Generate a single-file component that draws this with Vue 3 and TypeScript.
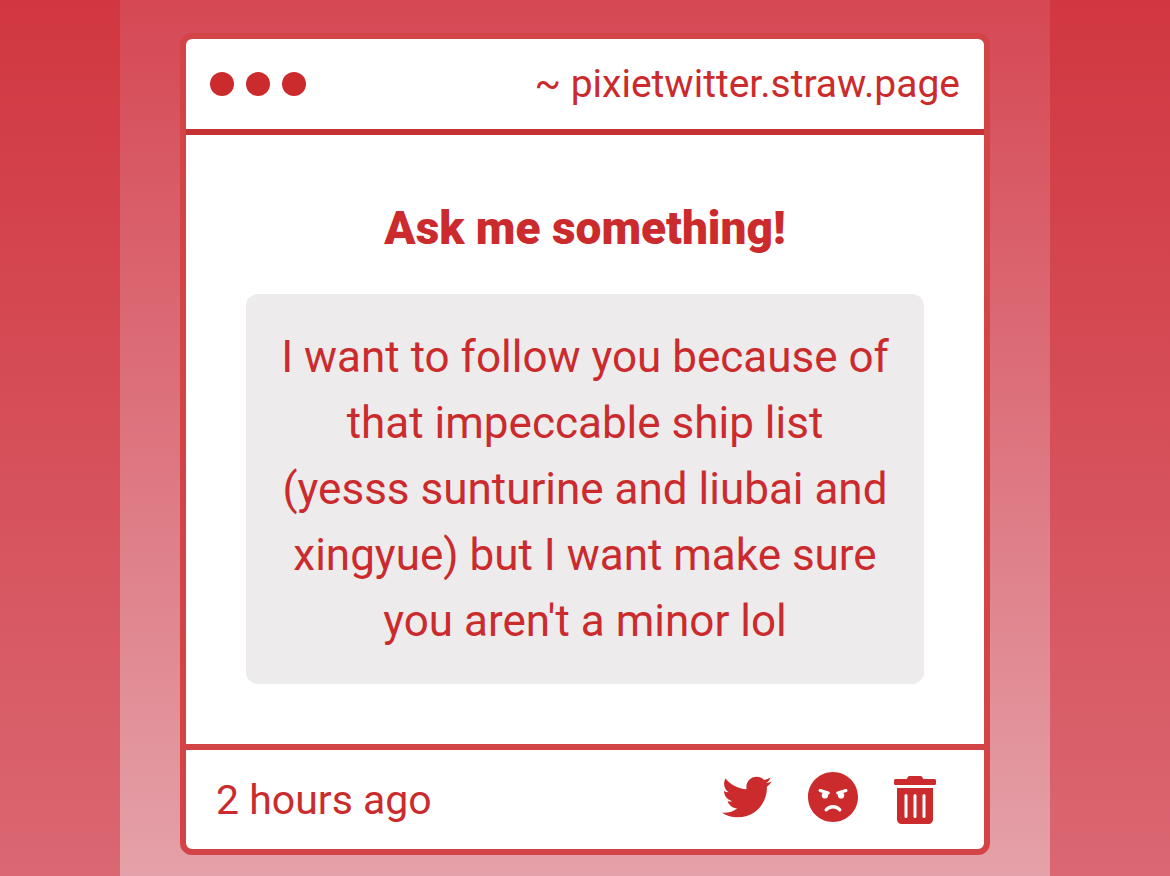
<script setup lang="ts">
import { ref } from 'vue'

interface Action {
  label: string
  viewBox: string
  kind: 'bird' | 'angry' | 'trash'
  path: string
}

const site = ref('~ pixietwitter.straw.page')
const title = ref('Ask me something!')
const message = ref(
  "I want to follow you because of that impeccable ship list (yesss sunturine and liubai and xingyue) but I want make sure you aren't a minor lol",
)
const age = ref('2 hours ago')

const actions: Action[] = [
  {
    label: 'Share on Twitter',
    kind: 'bird',
    viewBox: '0 0 512 512',
    path: 'M459.37 151.716c.325 4.548.325 9.097.325 13.645 0 138.72-105.583 298.558-298.558 298.558-59.452 0-114.68-17.219-161.137-47.106 8.447.974 16.568 1.299 25.34 1.299 49.055 0 94.213-16.568 130.274-44.832-46.132-.975-84.792-31.188-98.112-72.772 6.498.974 12.995 1.624 19.818 1.624 9.421 0 18.843-1.3 27.614-3.573-48.081-9.747-84.143-51.98-84.143-102.985v-1.299c13.969 7.797 30.214 12.67 47.431 13.319-28.264-18.843-46.781-51.005-46.781-87.391 0-19.492 5.197-37.36 14.294-52.954 51.655 63.675 129.3 105.258 216.365 109.807-1.624-7.797-2.599-15.918-2.599-24.04 0-57.828 46.782-104.934 104.934-104.934 30.213 0 57.502 12.67 76.67 33.137 23.715-4.548 46.456-13.32 66.599-25.34-7.798 24.366-24.366 44.833-46.132 57.827 21.117-2.273 41.584-8.122 60.426-16.243-14.292 20.791-32.161 39.308-52.628 54.253z',
  },
  {
    label: 'Block sender',
    kind: 'angry',
    viewBox: '0 8 496 496',
    path: 'M248 8C111 8 0 119 0 256s111 248 248 248 248-111 248-248S385 8 248 8zM136 240c0-9.3 4.1-17.5 10.5-23.4l-31-9.3c-8.5-2.5-13.3-11.5-10.7-19.9 2.5-8.5 11.4-13.2 19.9-10.7l80 24c8.5 2.5 13.3 11.5 10.7 19.9-2.1 6.9-8.4 11.4-15.3 11.4-.5 0-1.1-.2-1.7-.2.7 2.7 1.7 5.3 1.7 8.2 0 17.7-14.3 32-32 32S136 257.7 136 240zm168 154.2c-27.8-33.4-84.2-33.4-112.1 0-13.5 16.3-38.2-4.2-24.6-20.5 20-24 49.4-37.7 80.6-37.7s60.6 13.8 80.6 37.7c13.8 16.5-11.1 36.6-24.5 20.5zm76.6-186.9l-31 9.3c6.3 5.8 10.5 14.1 10.5 23.4 0 17.7-14.3 32-32 32s-32-14.3-32-32c0-2.9.9-5.6 1.7-8.2-.6.1-1.1.2-1.7.2-6.9 0-13.2-4.5-15.3-11.4-2.5-8.5 2.3-17.4 10.7-19.9l80-24c8.4-2.5 17.4 2.3 19.9 10.7 2.5 8.5-2.3 17.4-10.8 19.9z',
  },
  {
    label: 'Delete',
    kind: 'trash',
    viewBox: '0 0 448 512',
    path: 'M32 464a48 48 0 0 0 48 48h288a48 48 0 0 0 48-48V128H32zm272-256a16 16 0 0 1 32 0v224a16 16 0 0 1-32 0zm-96 0a16 16 0 0 1 32 0v224a16 16 0 0 1-32 0zm-96 0a16 16 0 0 1 32 0v224a16 16 0 0 1-32 0zM432 32H312l-9.4-18.7A24 24 0 0 0 281.1 0H166.8a23.72 23.72 0 0 0-21.4 13.3L136 32H16A16 16 0 0 0 0 48v32a16 16 0 0 0 16 16h416a16 16 0 0 0 16-16V48a16 16 0 0 0-16-16z',
  },
]
</script>

<template>
  <div class="page">
    <main class="column">
      <article class="card">
        <header class="bar">
          <div class="dots" aria-hidden="true"><i></i><i></i><i></i></div>
          <a class="site" href="#">{{ site }}</a>
        </header>
        <section class="body">
          <h1>{{ title }}</h1>
          <p class="message">{{ message }}</p>
        </section>
        <footer class="foot">
          <time>{{ age }}</time>
          <div class="actions">
            <button v-for="a in actions" :key="a.kind" type="button" :aria-label="a.label">
              <svg :class="a.kind" :viewBox="a.viewBox" aria-hidden="true"><path :d="a.path" /></svg>
            </button>
          </div>
        </footer>
      </article>
    </main>
  </div>
</template>

<style>
body {
  margin: 0;
}
</style>

<style scoped>
.page {
  box-sizing: border-box;
  min-height: 100vh;
  display: flex;
  padding: 0 120px;
  background: linear-gradient(#d13740, #da6772);
  color: #cb2b2d;
  font-family: Roboto, "Liberation Sans", sans-serif;
}
.column {
  flex: 1;
  min-width: 0;
  padding: 33px 60px 21px;
  background: linear-gradient(#d54854, #e5a1a9);
}
.card {
  border: 6px solid #d24446;
  border-radius: 12px;
  background: #fff;
}
.bar {
  display: flex;
  align-items: center;
  justify-content: space-between;
  min-height: 90px;
  padding: 0 24px;
  border-bottom: 6px solid #c43234;
}
.dots {
  display: flex;
  gap: 12px;
}
.dots i {
  width: 24px;
  height: 24px;
  border-radius: 50%;
  background: #cb2b2d;
}
.site {
  color: inherit;
  font-size: 39px;
  line-height: 60px;
  text-decoration: none;
}
.body {
  padding: 60px;
  text-align: center;
}
h1 {
  margin: 0 0 33px;
  font-size: 46px;
  line-height: 66px;
  font-weight: 900;
}
.message {
  margin: 0;
  padding: 30px 33px;
  border-radius: 12px;
  background: #edebec;
  font-size: 44px;
  line-height: 66px;
}
.foot {
  display: flex;
  align-items: center;
  justify-content: space-between;
  min-height: 99px;
  padding: 0 48px 0 30px;
  border-top: 6px solid #d24446;
}
time {
  font-size: 41px;
  line-height: 60px;
}
.actions {
  display: flex;
  align-items: flex-start;
  gap: 36px;
}
button {
  display: flex;
  padding: 0;
  border: 0;
  background: none;
  color: inherit;
  cursor: pointer;
}
svg {
  display: block;
  width: 50px;
  height: 50px;
  fill: currentColor;
}
.trash {
  width: 42px;
  height: 48px;
  padding: 4px 0;
}
</style>
